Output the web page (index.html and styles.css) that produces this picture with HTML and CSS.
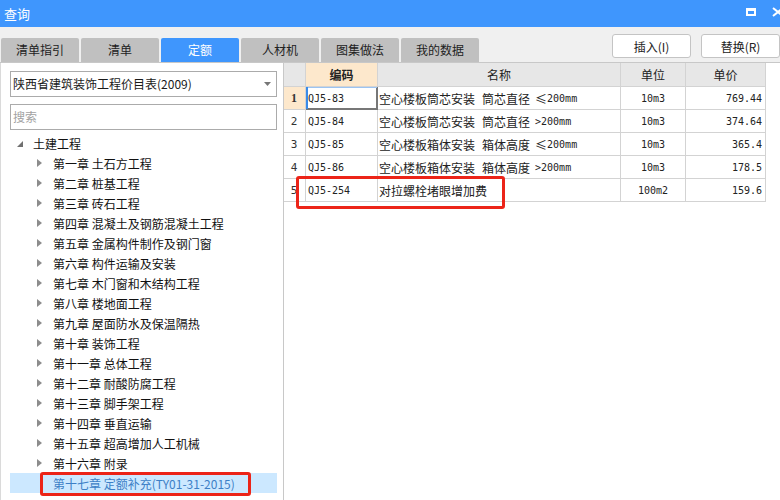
FILE: index.html
```html
<!DOCTYPE html>
<html lang="zh-CN">
<head>
<meta charset="utf-8">
<title>查询</title>
<link rel="stylesheet" href="styles.css">
</head>
<body>
<div class="win">
  <div class="titlebar">
    <span class="title">查询</span>
    <div class="wbtns">
      <span class="max"></span>
      <svg class="close" width="12" height="10" viewBox="0 0 12 10"><path d="M1 1 L11 9 M11 1 L1 9" stroke="#fff" stroke-width="2"/></svg>
    </div>
  </div>
  <div class="toolbar">
    <div class="tabs">
      <div class="tab">清单指引</div>
      <div class="tab">清单</div>
      <div class="tab active">定额</div>
      <div class="tab">人材机</div>
      <div class="tab">图集做法</div>
      <div class="tab">我的数据</div>
    </div>
    <div class="btns">
      <button class="btn">插入(I)</button>
      <button class="btn">替换(R)</button>
    </div>
  </div>
  <div class="main">
    <div class="left">
      <div class="select">陕西省建筑装饰工程价目表(2009)<svg class="caret" width="7" height="4" viewBox="0 0 7 4"><polygon points="0,0 7,0 3.5,4" fill="#777"/></svg></div>
      <div class="search">搜索</div>
      <ul class="tree">
        <li class="node root"><svg class="ico" width="6" height="6" viewBox="0 0 6 6"><polygon points="6,0 6,6 0,6" fill="#707070"/></svg>土建工程</li>
        <li class="node child"><svg class="ico" width="5" height="8" viewBox="0 0 5 8"><polygon points="0,0 5,4 0,8" fill="#8c8c8c"/></svg>第一章 土石方工程</li>
        <li class="node child"><svg class="ico" width="5" height="8" viewBox="0 0 5 8"><polygon points="0,0 5,4 0,8" fill="#8c8c8c"/></svg>第二章 桩基工程</li>
        <li class="node child"><svg class="ico" width="5" height="8" viewBox="0 0 5 8"><polygon points="0,0 5,4 0,8" fill="#8c8c8c"/></svg>第三章 砖石工程</li>
        <li class="node child"><svg class="ico" width="5" height="8" viewBox="0 0 5 8"><polygon points="0,0 5,4 0,8" fill="#8c8c8c"/></svg>第四章 混凝土及钢筋混凝土工程</li>
        <li class="node child"><svg class="ico" width="5" height="8" viewBox="0 0 5 8"><polygon points="0,0 5,4 0,8" fill="#8c8c8c"/></svg>第五章 金属构件制作及钢门窗</li>
        <li class="node child"><svg class="ico" width="5" height="8" viewBox="0 0 5 8"><polygon points="0,0 5,4 0,8" fill="#8c8c8c"/></svg>第六章 构件运输及安装</li>
        <li class="node child"><svg class="ico" width="5" height="8" viewBox="0 0 5 8"><polygon points="0,0 5,4 0,8" fill="#8c8c8c"/></svg>第七章 木门窗和木结构工程</li>
        <li class="node child"><svg class="ico" width="5" height="8" viewBox="0 0 5 8"><polygon points="0,0 5,4 0,8" fill="#8c8c8c"/></svg>第八章 楼地面工程</li>
        <li class="node child"><svg class="ico" width="5" height="8" viewBox="0 0 5 8"><polygon points="0,0 5,4 0,8" fill="#8c8c8c"/></svg>第九章 屋面防水及保温隔热</li>
        <li class="node child"><svg class="ico" width="5" height="8" viewBox="0 0 5 8"><polygon points="0,0 5,4 0,8" fill="#8c8c8c"/></svg>第十章 装饰工程</li>
        <li class="node child"><svg class="ico" width="5" height="8" viewBox="0 0 5 8"><polygon points="0,0 5,4 0,8" fill="#8c8c8c"/></svg>第十一章 总体工程</li>
        <li class="node child"><svg class="ico" width="5" height="8" viewBox="0 0 5 8"><polygon points="0,0 5,4 0,8" fill="#8c8c8c"/></svg>第十二章 耐酸防腐工程</li>
        <li class="node child"><svg class="ico" width="5" height="8" viewBox="0 0 5 8"><polygon points="0,0 5,4 0,8" fill="#8c8c8c"/></svg>第十三章 脚手架工程</li>
        <li class="node child"><svg class="ico" width="5" height="8" viewBox="0 0 5 8"><polygon points="0,0 5,4 0,8" fill="#8c8c8c"/></svg>第十四章 垂直运输</li>
        <li class="node child"><svg class="ico" width="5" height="8" viewBox="0 0 5 8"><polygon points="0,0 5,4 0,8" fill="#8c8c8c"/></svg>第十五章 超高增加人工机械</li>
        <li class="node child"><svg class="ico" width="5" height="8" viewBox="0 0 5 8"><polygon points="0,0 5,4 0,8" fill="#8c8c8c"/></svg>第十六章 附录</li>
        <li class="node leaf selected">第十七章 定额补充(TY01-31-2015)<span class="mark"></span></li>
      </ul>
    </div>
    <div class="right">
      <div class="grid-wrap">
        <div class="grid">
          <div class="c h rn"></div>
          <div class="c h cur">编码</div>
          <div class="c h">名称</div>
          <div class="c h">单位</div>
          <div class="c h">单价</div>

          <div class="c rn currow">1</div>
          <div class="c code focus"><span class="m">QJ5-83</span></div>
          <div class="c name">空心楼板筒芯安装<span class="gap"></span>筒芯直径<span class="gap2"></span>≤<span class="m">200mm</span></div>
          <div class="c unit"><span class="m">10m3</span></div>
          <div class="c price"><span class="m">769.44</span></div>

          <div class="c rn">2</div>
          <div class="c code"><span class="m">QJ5-84</span></div>
          <div class="c name">空心楼板筒芯安装<span class="gap"></span>筒芯直径<span class="gap2"></span><span class="m">&gt;200mm</span></div>
          <div class="c unit"><span class="m">10m3</span></div>
          <div class="c price"><span class="m">374.64</span></div>

          <div class="c rn">3</div>
          <div class="c code"><span class="m">QJ5-85</span></div>
          <div class="c name">空心楼板箱体安装<span class="gap"></span>箱体高度<span class="gap2"></span>≤<span class="m">200mm</span></div>
          <div class="c unit"><span class="m">10m3</span></div>
          <div class="c price"><span class="m">365.4</span></div>

          <div class="c rn">4</div>
          <div class="c code"><span class="m">QJ5-86</span></div>
          <div class="c name">空心楼板箱体安装<span class="gap"></span>箱体高度<span class="gap2"></span><span class="m">&gt;200mm</span></div>
          <div class="c unit"><span class="m">10m3</span></div>
          <div class="c price"><span class="m">178.5</span></div>

          <div class="c rn">5</div>
          <div class="c code"><span class="m">QJ5-254</span></div>
          <div class="c name">对拉螺栓堵眼增加费</div>
          <div class="c unit"><span class="m">100m2</span></div>
          <div class="c price"><span class="m">159.6</span></div>
        </div>
        <div class="redbox"></div>
      </div>
    </div>
  </div>
</div>
</body>
</html>
```
FILE: styles.css
```css
* { box-sizing: border-box; }
html, body { margin: 0; padding: 0; }
body {
  width: 780px;
  height: 500px;
  overflow: hidden;
  background: #f0f0f0;
  font-family: "Noto Sans CJK SC", "Noto Sans", sans-serif;
  font-size: 12px;
  color: #222;
}
.win { width: 780px; height: 500px; display: flex; flex-direction: column; }

.titlebar {
  height: 27px;
  background: #3f96fd;
  display: flex;
  align-items: center;
  justify-content: space-between;
  color: #fff;
  flex: none;
}
.title { font-size: 13px; padding-left: 4px; line-height: 27px; }
.wbtns { display: flex; align-items: center; gap: 16px; margin-right: -4px; }
.max {
  display: block;
  width: 10px;
  height: 8px;
  border: 2px solid #fff;
  border-top-width: 3px;
  margin-top: -4px;
}
.close { display: block; margin-top: -4px; }

.toolbar {
  height: 35px;
  flex: none;
  display: flex;
  justify-content: space-between;
}
.tabs { display: flex; align-items: flex-end; padding-left: 1px; gap: 2px; }
.tab {
  width: 78px;
  height: 24px;
  background: #c0c0c0;
  border-radius: 2px 2px 0 0;
  color: #222;
  text-align: center;
  line-height: 24px;
  font-size: 12px;
}
.tab.active { background: #3f96fd; color: #fff; }
.btns { display: flex; gap: 10px; padding-top: 7px; }
.btn {
  width: 79px;
  height: 24px;
  background: #fff;
  border: 1px solid #c4c4c4;
  border-radius: 3px;
  font-family: inherit;
  font-size: 12px;
  color: #222;
  padding: 0;
}

.main {
  flex: 1;
  display: flex;
  border-top: 1px solid #c8c8c8;
  min-height: 0;
}
.left {
  width: 284px;
  flex: none;
  background: #fff;
  border-left: 1px solid #dadada;
  border-right: 1px solid #c8c8c8;
  padding: 8px 0 0 9px;
}
.select, .search {
  width: 267px;
  height: 26px;
  border: 1px solid #ababab;
  padding-left: 2px;
  line-height: 24px;
  display: flex;
  align-items: center;
  justify-content: space-between;
}
.select { padding-right: 5px; color: #1a1a1a; }
.search { margin-top: 7px; color: #a2a2a2; }

.tree { list-style: none; margin: 3px 0 0; padding: 0; width: 267px; }
.node {
  height: 20px;
  display: flex;
  align-items: center;
  white-space: nowrap;
  color: #111;
}
.root { padding-left: 7px; }
.root .ico { margin-right: 10px; margin-top: 2px; }
.child { padding-left: 27px; }
.child .ico { margin-right: 11px; }
.leaf { padding-left: 43px; position: relative; }
.selected { background: #cce8ff; color: #3d7fc6; }
.mark {
  position: absolute;
  left: 30px;
  top: -1px;
  width: 211px;
  height: 24px;
  border: 3px solid #ec2418;
  border-radius: 3px;
}

.right { flex: 1; background: #fff; }
.grid-wrap { position: relative; }
.grid {
  display: grid;
  grid-template-columns: 22px 72px 243px 65px 80px;
  grid-template-rows: 24px;
  grid-auto-rows: 23px;
  width: 482px;
}
.c {
  border-right: 1px solid #d3d3d3;
  border-bottom: 1px solid #d3d3d3;
  display: flex;
  align-items: center;
  white-space: nowrap;
  overflow: hidden;
}
.h {
  background: #e7e7e7;
  justify-content: center;
  color: #222;
}
.h.cur, .rn.currow { background: #fde8cc; }
.h.cur { font-weight: bold; }
.rn { justify-content: center; padding-right: 1px; color: #333; font-family: "DejaVu Sans Mono", monospace; font-size: 11px; }
.rn.currow { font-weight: bold; font-family: "Liberation Serif", serif; font-size: 12px; }
.code { padding-left: 2px; }
.name { padding-left: 1px; }
.gap { display: inline-block; width: 7px; }
.gap2 { display: inline-block; width: 5px; }
.unit { justify-content: center; }
.price { justify-content: flex-end; padding-right: 3px; }
.m { font-family: "DejaVu Sans Mono", monospace; font-size: 10px; }
.focus {
  box-shadow: inset 2px 0 0 #3a8be8, inset 0 1px 0 #9cc4f2, inset -1px -1px 0 #777;
  border-right-color: #777;
  border-bottom-color: #777;
}
.redbox {
  position: absolute;
  left: 12px;
  top: 113px;
  width: 209px;
  height: 33px;
  border: 3px solid #ec2418;
  border-radius: 3px;
}
```
